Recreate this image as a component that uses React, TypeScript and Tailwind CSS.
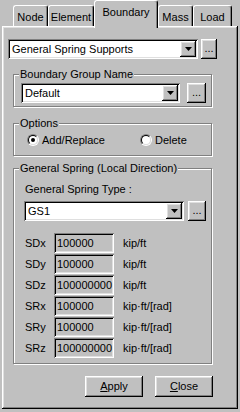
import React from "react";

const sunken =
  "shadow-[inset_1px_1px_0_#808080,inset_-1px_-1px_0_#ffffff,inset_2px_2px_0_#000000,inset_-2px_-2px_0_#dfdfdf]";
const raised =
  "shadow-[inset_-1px_-1px_0_#000000,inset_1px_1px_0_#ffffff,inset_-2px_-2px_0_#808080,inset_2px_2px_0_#dfdfdf]";

function Arrow() {
  return (
    <div className={`w-[16px] h-full bg-[#c0c0c0] flex items-center justify-center ${raised}`}>
      <svg width="7" height="4" viewBox="0 0 7 4">
        <polygon points="0,0 7,0 3.5,4" fill="#000" />
      </svg>
    </div>
  );
}

function Combo({ text, className }: { text: string; className: string }) {
  return (
    <div className={`bg-white flex items-stretch p-[2px] ${sunken} ${className}`}>
      <div className="flex-1 flex items-center pl-[2px] leading-none">{text}</div>
      <Arrow />
    </div>
  );
}

function Dots({ className }: { className: string }) {
  return (
    <div className={`bg-[#c0c0c0] flex items-center justify-center leading-none pb-[2px] ${raised} ${className}`}>
      ...
    </div>
  );
}

function Radio({ checked }: { checked: boolean }) {
  return (
    <div className="w-[12px] h-[12px] rounded-full border border-t-[#808080] border-l-[#808080] border-r-white border-b-white">
      <div className="w-full h-full rounded-full border border-t-black border-l-black border-r-[#dfdfdf] border-b-[#dfdfdf] bg-white flex items-center justify-center">
        {checked && <div className="w-[4px] h-[4px] rounded-full bg-black" />}
      </div>
    </div>
  );
}

function Group({
  label,
  className,
  inner,
  children,
}: {
  label: string;
  className: string;
  inner: string;
  children: React.ReactNode;
}) {
  return (
    <fieldset
      className={`border border-[#808080] shadow-[inset_1px_1px_0_#ffffff,1px_1px_0_#ffffff] w-[199px] ml-[5px] ${className}`}
    >
      <legend className="ml-[5px] px-[1px] leading-[13px] bg-[#c0c0c0]">{label}</legend>
      <div className={inner}>{children}</div>
    </fieldset>
  );
}

const rows = [
  { l: "SDx", v: "100000", u: "kip/ft" },
  { l: "SDy", v: "100000", u: "kip/ft" },
  { l: "SDz", v: "100000000", u: "kip/ft" },
  { l: "SRx", v: "100000", u: "kip·ft/[rad]" },
  { l: "SRy", v: "100000", u: "kip·ft/[rad]" },
  { l: "SRz", v: "100000000", u: "kip·ft/[rad]" },
];

const tab = "h-[21px] border-l border-t border-white border-r border-r-black rounded-t-[3px] shadow-[inset_-1px_0_0_#808080] flex justify-center pt-[3px]";

export default function App() {
  return (
    <div className="w-[240px] h-[412px] bg-[#c0c0c0] px-[2px] pb-[3px] flex flex-col text-[11px] text-black font-['Liberation_Sans',Arial,sans-serif]">
      {/* tabs */}
      <div className="h-[26px] flex items-end pl-[11px]">
        <div className={`w-[35px] ${tab}`}>Node</div>
        <div className={`w-[46px] ${tab}`}>Element</div>
        <div className="relative z-10 -mb-[2px] w-[64px] h-[28px] bg-[#c0c0c0] border-l border-t border-white border-r border-r-black rounded-t-[3px] shadow-[inset_-1px_0_0_#808080] flex justify-center pt-[3px]">
          Boundary
        </div>
        <div className={`w-[35px] ${tab}`}>Mass</div>
        <div className={`w-[39px] ${tab}`}>Load</div>
      </div>

      {/* panel */}
      <div className={`flex-1 flex flex-col pl-[6px] pt-[13px] ${raised}`}>
        <div className="flex gap-[3px]">
          <Combo text="General Spring Supports" className="w-[190px] h-[20px]" />
          <Dots className="w-[16px] h-[20px]" />
        </div>

        <Group label="Boundary Group Name" className="mt-[9px]" inner="pl-[7px] pt-[2px] pb-[3px]">
          <div className="flex gap-[7px]">
            <Combo text="Default" className="w-[159px] h-[20px]" />
            <Dots className="w-[19px] h-[20px]" />
          </div>
        </Group>

        <Group label="Options" className="mt-[10px]" inner="pl-[13px] pt-[3px] pb-[8px]">
          <div className="flex items-center h-[14px]">
            <Radio checked />
            <span className="ml-[3px] w-[98px]">Add/Replace</span>
            <Radio checked={false} />
            <span className="ml-[3px]">Delete</span>
          </div>
        </Group>

        <Group label="General Spring (Local Direction)" className="mt-[6px]" inner="pl-[10px] pb-[5px]">
          <div className="mt-[8px] pl-[1px] leading-[13px]">General Spring Type :</div>
          <div className="flex gap-[4px] mt-[5px]">
            <Combo text="GS1" className="w-[160px] h-[20px]" />
            <Dots className="w-[18px] h-[20px]" />
          </div>
          <div className="mt-[12px] flex flex-col gap-[1px]">
            {rows.map((r) => (
              <div key={r.l} className="flex items-center h-[20px]">
                <span className="w-[30px] pl-[1px]">{r.l}</span>
                <div className={`w-[60px] h-[20px] flex items-center pl-[3px] bg-[#c0c0c0] ${sunken}`}>
                  {r.v}
                </div>
                <span className="ml-[9px]">{r.u}</span>
              </div>
            ))}
          </div>
        </Group>

        <div className="flex gap-[12px] pl-[77px] mt-[12px]">
          <div className={`w-[58px] h-[21px] flex items-center justify-center ${raised}`}>
            <span>
              <span className="underline">A</span>pply
            </span>
          </div>
          <div className={`w-[58px] h-[21px] flex items-center justify-center ${raised}`}>
            <span>
              <span className="underline">C</span>lose
            </span>
          </div>
        </div>
      </div>
    </div>
  );
}
